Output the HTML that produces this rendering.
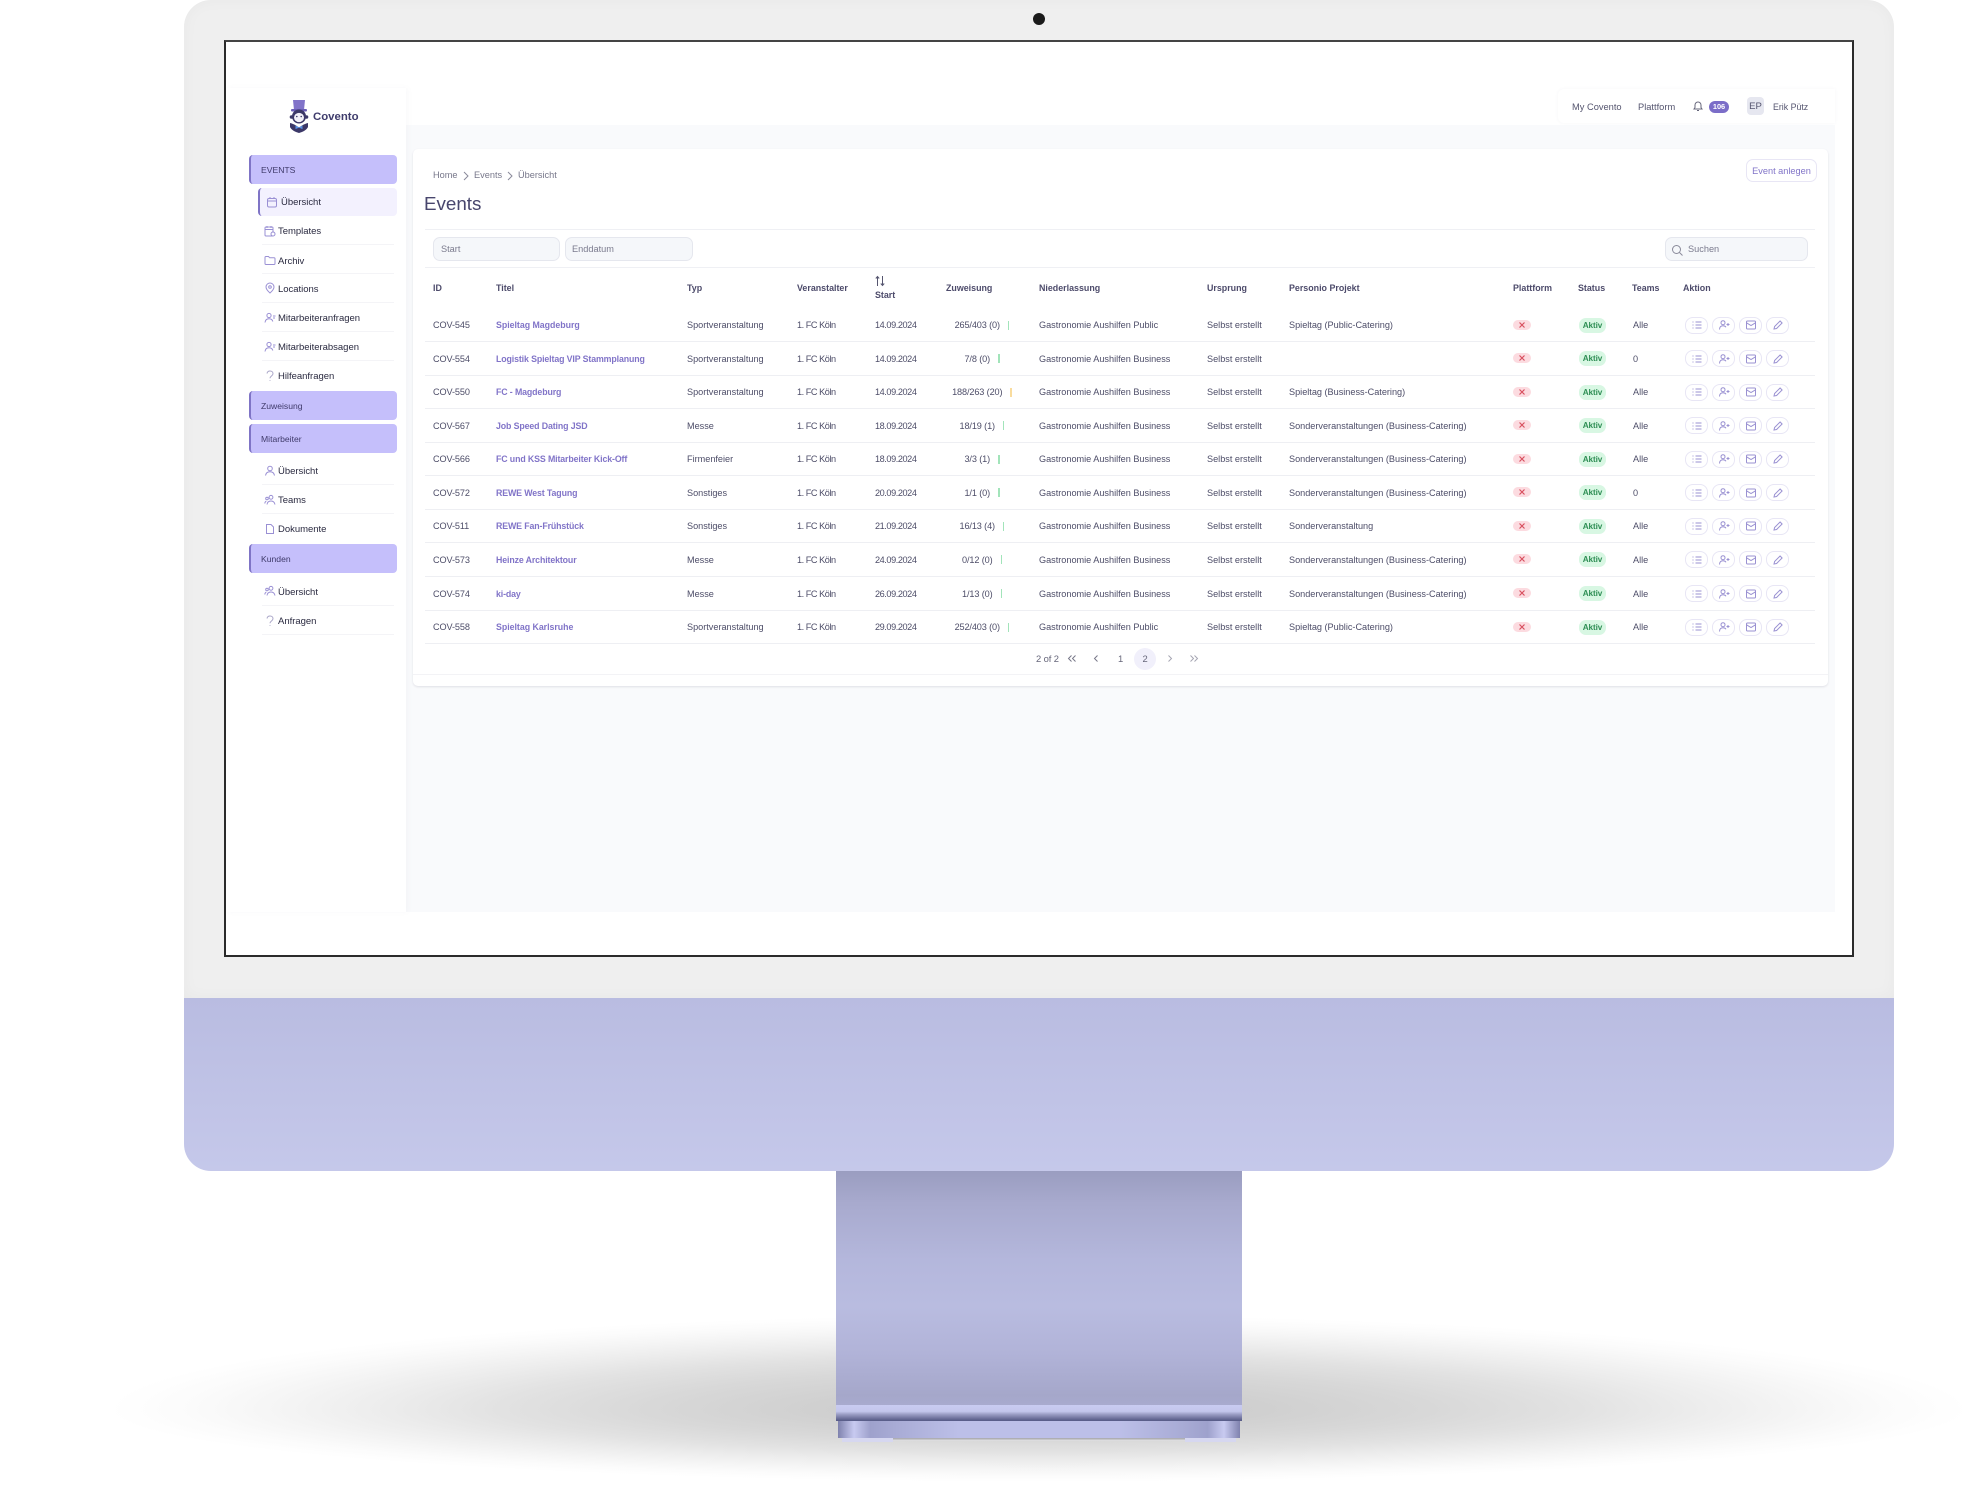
<!DOCTYPE html>
<html lang="de"><head><meta charset="utf-8"><title>Covento</title>
<style>
html,body{margin:0;padding:0;background:#fff}
#p{position:relative;width:1982px;height:1490px;overflow:hidden;background:#fff;font-family:"Liberation Sans",sans-serif;color:#55556f}
#p div,#p span.a{position:absolute}
.sh1{left:0;top:1310px;width:1982px;height:100px;background:radial-gradient(ellipse 930px 95px at 1039px 100px,#cbcbcb 0,#cfcfcf 22%,#d8d8d8 42%,#e2e2e2 58%,#ececec 70%,#f5f5f5 82%,#fbfbfb 91%,#fff 100%)}
.sh2{left:0;top:1410px;width:1982px;height:80px;background:radial-gradient(ellipse 930px 72px at 1039px 0,#cbcbcb 0,#cfcfcf 22%,#d8d8d8 42%,#e2e2e2 58%,#ececec 70%,#f5f5f5 82%,#fbfbfb 91%,#fff 100%)}
.bez{left:184px;top:0;width:1710px;height:998px;background:#efefef;border-radius:27px 27px 0 0;box-shadow:inset 0 0 16px rgba(0,0,0,.03)}
.chin{left:184px;top:998px;width:1710px;height:173px;border-radius:0 0 27px 27px;background:linear-gradient(#b9bce1,#c5c8ea)}
.cam{left:1033px;top:13px;width:12px;height:12px;border-radius:50%;background:#1a1a1a}
.scr{left:224px;top:40px;width:1626px;height:913px;background:#fff;border:2px solid #2b2b2b;border-top-color:#444}
.stand{left:836px;top:1171px;width:406px;height:234px;background:linear-gradient(#9a9dc0 0,#a8aace 14%,#b4b7dc 38%,#b9bce0 58%,#b1b3d8 78%,#a5a7ca 96%,#a8aace 100%)}
.band{left:836px;top:1405px;width:406px;height:16px;background:linear-gradient(#c9cbf1 0,#c3c6ec 40%,#9b9ec5 58%,#5a5e8a 95%)}
.foot{left:838px;top:1421px;width:402px;height:17px;background:linear-gradient(90deg,#7f82ae 0,#c8caf0 4%,#9ea1cc 8%,#a8abd5 14%,#bcbfe8 30%,#bcbfe8 70%,#a8abd5 86%,#9ea1cc 92%,#c8caf0 96%,#7f82ae 100%)}
.t1{left:842px;top:1438px;width:51px;height:4px;background:#d6d7f0}
.t2{left:1185px;top:1438px;width:51px;height:4px;background:#d6d7f0}
.t3{left:893px;top:1438px;width:292px;height:3px;background:linear-gradient(#a2a2a8,#e8e8e8)}
#u{left:0;top:0;width:1982px;height:1490px;filter:blur(.3px)}
.bg{left:406px;top:125px;width:1429px;height:787px;background:#f9fafc}
.side{left:226px;top:88px;width:180px;height:824px;background:#fff;box-shadow:2px 0 5px rgba(90,90,130,.04)}
.hd{left:1558px;top:89px;width:277px;height:34px;background:#fff;border-radius:6px 0 0 6px;box-shadow:0 0 3px rgba(90,90,130,.06)}
.card{left:413px;top:149px;width:1415px;height:537px;background:#fff;border-radius:5px;box-shadow:0 1px 2px rgba(70,70,100,.14)}
.t{white-space:nowrap;font-size:9.3px;line-height:14px}
.sec{left:249px;width:148px;height:29px;background:#c5bffb;border-left:2.5px solid #7f74c6;box-sizing:border-box;border-radius:4px;font-size:8.6px;line-height:30.5px;padding-left:10px;color:#3f3a6a}
.act{left:258px;top:188px;width:139px;height:28px;background:#f3f1fe;border-left:2.5px solid #7f74c6;box-sizing:border-box;border-radius:4px}
.it{left:278px;font-size:9.5px;line-height:14px;color:#2a2a40;white-space:nowrap;margin-top:-6px;letter-spacing:-.02px}
.sl{left:262px;width:132px;height:1px;background:#f4f4f7}
.ic{left:264px;margin-top:-6px;width:12px;height:12px}
.ic svg,.x svg{display:block}
.l{height:1px;background:#eff0f4}
.inp{top:237px;height:24px;background:#f5f7fa;border:1px solid #e5e7ee;box-sizing:border-box;border-radius:7px;font-size:9.2px;line-height:23px;color:#7b7b8e}
.th{top:281px;font-size:8.9px;font-weight:bold;line-height:14px;color:#4d4b6b;white-space:nowrap}
.r{left:425px;width:1390px;height:33.55px;border-bottom:1px solid #eeeff3;box-sizing:border-box}
.r>span{position:absolute;top:9.5px;line-height:14px;font-size:9.15px;color:#4d4d68;white-space:nowrap}
.r>.c1{left:8px;letter-spacing:-.1px}
.r>.c2{left:71px;font-weight:bold;font-size:8.8px;color:#8174c8;letter-spacing:-.12px}
.r>.c3{left:262px}
.r>.c4{left:372px;letter-spacing:-.45px}
.r>.c5{left:450px;letter-spacing:-.42px}
.r>.c6{left:497px;width:120px;display:flex;justify-content:center;align-items:center;gap:8px;letter-spacing:-.12px}
.r>.c6 i{display:block;width:1.5px;height:9px;background:#a2e4ba}
.r>.c6 i.o{background:#f9dc9e}
.r>.c7{left:614px}
.r>.c8{left:782px}
.r>.c9{left:864px}
.r>.pl{left:1088px;top:11px;width:18px;height:10px;background:#fcdbe0;border-radius:5px}
.r>.st{left:1154px;top:9px;width:27px;height:15px;background:#d8f7e3;border-radius:7px;text-align:center;color:#2f8f55;font-weight:bold;font-size:8.2px;line-height:15px;letter-spacing:-.1px}
.r>.c12{left:1208px}
.r>.b1,.r>.b2,.r>.b3,.r>.b4{top:8px;width:21px;height:15px;border:1px solid #e8e6f5;border-radius:8px;background:#fff;box-sizing:content-box}
.r>.b1{left:1260px}.r>.b2{left:1287px}.r>.b3{left:1314px}.r>.b4{left:1341px}
.r svg{display:block;margin:1.5px auto 0}
.pg{top:652px;font-size:9.4px;line-height:14px;color:#66667a;white-space:nowrap}
</style></head><body>
<svg width="0" height="0" style="position:absolute"><defs>
<symbol id="ix" viewBox="0 0 10 10"><path d="M2.500 2.500l5 5M7.500 2.500l-5 5" stroke="#d8505f" stroke-width="1.2" fill="none"/></symbol>
<symbol id="il" viewBox="0 0 12 12"><path d="M4.500 3h6M4.500 6h6M4.500 9h6M1.500 3h1M1.500 6h1M1.500 9h1" stroke="#9a91d2" fill="none"/></symbol>
<symbol id="iu" viewBox="0 0 12 12"><circle cx="5" cy="3.700" r="2" stroke="#9a91d2" fill="none"/><path d="M1.500 10.500c0-2.500 1.500-3.800 3.500-3.800 1.400 0 2.400.5 3 1.500M8.500 5.500h3M10 4v3" stroke="#9a91d2" fill="none"/></symbol>
<symbol id="im" viewBox="0 0 12 12"><rect x="1.500" y="2" width="9" height="8" rx="1" stroke="#9a91d2" fill="none"/><path d="M1.500 3.800l4.500 2.700 4.500-2.700" stroke="#9a91d2" fill="none"/></symbol>
<symbol id="ip" viewBox="0 0 12 12"><path d="M2 10l.6-2.500 5.500-5.500 2 2-5.500 5.500z" stroke="#9a91d2" fill="none"/></symbol>
<symbol id="ue" viewBox="0 0 12 12"><circle cx="6" cy="3.500" r="2.300" stroke="#9a90d4" fill="none"/><path d="M1.500 10.500c.4-2.600 2.200-3.800 4.500-3.800s4.100 1.200 4.500 3.800" stroke="#9a90d4" fill="none"/></symbol>
<symbol id="ua" viewBox="0 0 12 12"><circle cx="5" cy="3.500" r="2.100" stroke="#9a90d4" fill="none"/><path d="M1 10.500c.3-2.600 1.900-3.800 4-3.800s3.400 1 3.800 2.800M9 4h2.500M9 6h2" stroke="#9a90d4" fill="none"/></symbol>
<symbol id="ut" viewBox="0 0 12 12"><circle cx="7" cy="3.300" r="1.900" stroke="#9a90d4" fill="none"/><circle cx="3" cy="4.500" r="1.300" stroke="#9a90d4" fill="none"/><path d="M3 10.500c.3-2.400 1.800-3.500 4-3.500s3.500 1.100 4 3.500M.8 9.500c.1-1.200.6-2 1.500-2.400" stroke="#9a90d4" fill="none"/></symbol>
<symbol id="uq" viewBox="0 0 12 12"><path d="M3 3.500C3.300 1.800 4.500 1 6 1c1.800 0 3 1.100 3 2.600 0 2.400-3 2.400-3 4.700M6 10.300v.7" stroke="#aaa6c8" fill="none"/></symbol>
</defs></svg>
<div id="p">
<div class="sh1"></div><div class="sh2"></div>
<div class="bez"></div><div class="chin"></div><div class="cam"></div>
<div class="stand"></div><div class="band"></div><div class="t3"></div><div class="t1"></div><div class="t2"></div><div class="foot"></div>
<div class="scr"></div>
<div id="u">
<div class="bg"></div><div class="side"></div><div class="hd"></div><div class="card"></div>

<div style="left:288px;top:99px;width:22px;height:35px"><svg width="22" height="35" viewBox="0 0 22 35">
<path d="M5 1h12l-1 10H6z" fill="#8173c9"/><rect x="3" y="10" width="16" height="2.500" rx="1" fill="#6a5db5"/>
<circle cx="11" cy="17.500" r="7" fill="#3c3868"/><circle cx="3.500" cy="18" r="1.800" fill="#3c3868"/><circle cx="18.500" cy="18" r="1.800" fill="#3c3868"/>
<ellipse cx="11" cy="18.500" rx="5" ry="4.600" fill="#f2f0f8"/><circle cx="8.800" cy="17.500" r=".8" fill="#3c3868"/><circle cx="13.200" cy="17.500" r=".8" fill="#3c3868"/>
<path d="M2 24c2 .5 4 1.200 6 2.500l3 2 3-2c2-1.300 4-2 6-2.500v4c-1 2.500-5 5-9 6-4-1-8-3.500-9-6z" fill="#3c3868"/>
<path d="M7.500 26.500l3.500 1.700 3.500-1.700v3.600l-3.500-1.500-3.500 1.500z" fill="#5b8fe0"/></svg></div>
<div class="t" style="left:313px;top:109.500px;font-size:11.400px;font-weight:bold;color:#3f3c6c">Covento</div>

<div class="sec" style="top:155px">EVENTS</div>
<div class="act"></div>
<div class="ic" style="left:266px;top:202px"><svg width="12" height="12" viewBox="0 0 12 12"><rect x="1.500" y="2.500" width="9" height="8.500" rx="1.500" stroke="#9a90d4" fill="none"/><path d="M1.500 5h9M4 1v2M8 1v2" stroke="#9a90d4" fill="none"/></svg></div>
<div class="it" style="left:281px;top:202px">Übersicht</div>
<div class="ic" style="top:231px"><svg width="12" height="12" viewBox="0 0 12 12"><rect x="1" y="2" width="8" height="9" rx="1" stroke="#9a90d4" fill="none"/><path d="M1 4.500h8M3 1v2M7 1v2" stroke="#9a90d4" fill="none"/><circle cx="9" cy="9" r="2" fill="#fff" stroke="#9a90d4"/></svg></div>
<div class="it" style="top:231px">Templates</div><div class="sl" style="top:244px"></div>
<div class="ic" style="top:260px"><svg width="12" height="12" viewBox="0 0 12 12"><path d="M1 3.500c0-.6.400-1 1-1h2.500l1.200 1.300H10c.6 0 1 .4 1 1v4.700c0 .6-.4 1-1 1H2c-.6 0-1-.4-1-1z" stroke="#9a90d4" fill="none"/></svg></div>
<div class="it" style="top:260.500px">Archiv</div><div class="sl" style="top:273px"></div>
<div class="ic" style="top:288px"><svg width="12" height="12" viewBox="0 0 12 12"><path d="M6 11C3.500 8.800 2 7 2 5a4 4 0 018 0c0 2-1.500 3.800-4 6z" stroke="#9a90d4" fill="none"/><circle cx="6" cy="5" r="1.300" stroke="#9a90d4" fill="none"/></svg></div>
<div class="it" style="top:289px">Locations</div><div class="sl" style="top:302px"></div>
<div class="ic" style="top:318px"><svg width="12" height="12"><use href="#ua"/></svg></div>
<div class="it" style="top:318px">Mitarbeiteranfragen</div><div class="sl" style="top:331px"></div>
<div class="ic" style="top:347px"><svg width="12" height="12"><use href="#ua"/></svg></div>
<div class="it" style="top:347px">Mitarbeiterabsagen</div><div class="sl" style="top:360px"></div>
<div class="ic" style="top:376px"><svg width="12" height="12"><use href="#uq"/></svg></div>
<div class="it" style="top:376px">Hilfeanfragen</div>
<div class="sec" style="top:391px">Zuweisung</div>
<div class="sec" style="top:424px">Mitarbeiter</div>
<div class="ic" style="top:471px"><svg width="12" height="12"><use href="#ue"/></svg></div>
<div class="it" style="top:471px">Übersicht</div><div class="sl" style="top:484px"></div>
<div class="ic" style="top:500px"><svg width="12" height="12"><use href="#ut"/></svg></div>
<div class="it" style="top:500px">Teams</div><div class="sl" style="top:513px"></div>
<div class="ic" style="top:529px"><svg width="12" height="12" viewBox="0 0 12 12"><path d="M2.500 1.500h4.500l2.500 2.500v6.500h-7z" stroke="#9a90d4" fill="none"/></svg></div>
<div class="it" style="top:529px">Dokumente</div>
<div class="sec" style="top:544px">Kunden</div>
<div class="ic" style="top:591px"><svg width="12" height="12"><use href="#ut"/></svg></div>
<div class="it" style="top:592px">Übersicht</div><div class="sl" style="top:605px"></div>
<div class="ic" style="top:621px"><svg width="12" height="12"><use href="#uq"/></svg></div>
<div class="it" style="top:621px">Anfragen</div><div class="sl" style="top:634px"></div>

<div class="t" style="left:1572px;top:100px">My Covento</div>
<div class="t" style="left:1638px;top:100px">Plattform</div>
<div style="left:1692px;top:99px;width:12px;height:12px"><svg width="12" height="12" viewBox="0 0 12 12"><path d="M2 9h8L9 7.500V5a3 3 0 00-6 0v2.500zM5 10.500h2" stroke="#66667a" fill="none"/></svg></div>
<div style="left:1709px;top:101px;width:20px;height:12px;border-radius:6px;background:#7b6dc8;color:#fff;font-size:7.400px;font-weight:bold;line-height:12px;text-align:center">106</div>
<div style="left:1747px;top:97px;width:17px;height:18px;border-radius:4px;background:#e6e7f0;color:#55556f;font-size:9.600px;line-height:19px;text-align:center">EP</div>
<div class="t" style="left:1773px;top:100px;font-size:8.800px">Erik Pütz</div>

<div class="t" style="left:433px;top:168px;font-size:9.2px;color:#77778a">Home</div>
<div style="left:463px;top:168px;width:6px;height:10px"><svg width="6" height="10"><path d="M1 1l4 4-4 4" stroke="#8a8a9a" fill="none"/></svg></div>
<div class="t" style="left:474px;top:168px;font-size:9.2px;color:#77778a">Events</div>
<div style="left:507px;top:168px;width:6px;height:10px"><svg width="6" height="10"><path d="M1 1l4 4-4 4" stroke="#8a8a9a" fill="none"/></svg></div>
<div class="t" style="left:518px;top:168px;font-size:9.2px;color:#77778a">Übersicht</div>
<div class="t" style="left:424px;top:193px;font-size:18.800px;line-height:22px;color:#48466d">Events</div>
<div style="left:1746px;top:159px;width:71px;height:23px;box-sizing:border-box;border:1px solid #e8e6f5;border-radius:7px;background:#fff;text-align:center;font-size:9.2px;line-height:23px;color:#8174c8;white-space:nowrap">Event anlegen</div>

<div class="l" style="left:425px;top:229px;width:1390px"></div>
<div class="inp" style="left:433px;width:127px;padding-left:7px">Start</div>
<div class="inp" style="left:565px;width:128px;padding-left:6px">Enddatum</div>
<div class="inp" style="left:1665px;width:143px;padding-left:22px">Suchen</div>
<div style="left:1671px;top:243px;width:12px;height:12px"><svg width="12" height="12"><circle cx="5.500" cy="5.500" r="4" stroke="#8a8a9a" fill="none"/><path d="M8.500 8.500l3 3" stroke="#8a8a9a" fill="none"/></svg></div>
<div class="l" style="left:425px;top:267px;width:1390px"></div>

<div class="th" style="left:433px">ID</div>
<div class="th" style="left:496px">Titel</div>
<div class="th" style="left:687px">Typ</div>
<div class="th" style="left:797px">Veranstalter</div>
<div style="left:875px;top:274px;width:10px;height:12px"><svg width="10" height="12"><path d="M2.500 11V1.500M.8 3.500l1.700-2 1.700 2M7.500 1v9.500M5.800 8.500l1.700 2 1.700-2" stroke="#55556f" fill="none"/></svg></div>
<div class="th" style="left:875px;top:288px">Start</div>
<div class="th" style="left:946px">Zuweisung</div>
<div class="th" style="left:1039px">Niederlassung</div>
<div class="th" style="left:1207px">Ursprung</div>
<div class="th" style="left:1289px">Personio Projekt</div>
<div class="th" style="left:1513px">Plattform</div>
<div class="th" style="left:1578px">Status</div>
<div class="th" style="left:1632px">Teams</div>
<div class="th" style="left:1683px">Aktion</div>

<div class="r" style="top:308.500px"><span class="c1">COV-545</span><span class="c2" style="letter-spacing:-.02px">Spieltag Magdeburg</span><span class="c3">Sportveranstaltung</span><span class="c4">1. FC Köln</span><span class="c5">14.09.2024</span><span class="c6">265/403 (0)<i></i></span><span class="c7">Gastronomie Aushilfen Public</span><span class="c8">Selbst erstellt</span><span class="c9">Spieltag (Public-Catering)</span><span class="pl"><svg width="10" height="10" style="margin:0 auto"><use href="#ix"/></svg></span><span class="st">Aktiv</span><span class="c12">Alle</span><span class="b1"><svg width="12" height="12"><use href="#il"/></svg></span><span class="b2"><svg width="12" height="12"><use href="#iu"/></svg></span><span class="b3"><svg width="12" height="12"><use href="#im"/></svg></span><span class="b4"><svg width="12" height="12"><use href="#ip"/></svg></span></div>
<div class="r" style="top:342px"><span class="c1">COV-554</span><span class="c2">Logistik Spieltag VIP Stammplanung</span><span class="c3">Sportveranstaltung</span><span class="c4">1. FC Köln</span><span class="c5">14.09.2024</span><span class="c6">7/8 (0)<i></i></span><span class="c7">Gastronomie Aushilfen Business</span><span class="c8">Selbst erstellt</span><span class="pl"><svg width="10" height="10" style="margin:0 auto"><use href="#ix"/></svg></span><span class="st">Aktiv</span><span class="c12">0</span><span class="b1"><svg width="12" height="12"><use href="#il"/></svg></span><span class="b2"><svg width="12" height="12"><use href="#iu"/></svg></span><span class="b3"><svg width="12" height="12"><use href="#im"/></svg></span><span class="b4"><svg width="12" height="12"><use href="#ip"/></svg></span></div>
<div class="r" style="top:375.600px"><span class="c1">COV-550</span><span class="c2">FC - Magdeburg</span><span class="c3">Sportveranstaltung</span><span class="c4">1. FC Köln</span><span class="c5">14.09.2024</span><span class="c6">188/263 (20)<i class="o"></i></span><span class="c7">Gastronomie Aushilfen Business</span><span class="c8">Selbst erstellt</span><span class="c9">Spieltag (Business-Catering)</span><span class="pl"><svg width="10" height="10" style="margin:0 auto"><use href="#ix"/></svg></span><span class="st">Aktiv</span><span class="c12">Alle</span><span class="b1"><svg width="12" height="12"><use href="#il"/></svg></span><span class="b2"><svg width="12" height="12"><use href="#iu"/></svg></span><span class="b3"><svg width="12" height="12"><use href="#im"/></svg></span><span class="b4"><svg width="12" height="12"><use href="#ip"/></svg></span></div>
<div class="r" style="top:409.200px"><span class="c1">COV-567</span><span class="c2">Job Speed Dating JSD</span><span class="c3">Messe</span><span class="c4">1. FC Köln</span><span class="c5">18.09.2024</span><span class="c6">18/19 (1)<i></i></span><span class="c7">Gastronomie Aushilfen Business</span><span class="c8">Selbst erstellt</span><span class="c9">Sonderveranstaltungen (Business-Catering)</span><span class="pl"><svg width="10" height="10" style="margin:0 auto"><use href="#ix"/></svg></span><span class="st">Aktiv</span><span class="c12">Alle</span><span class="b1"><svg width="12" height="12"><use href="#il"/></svg></span><span class="b2"><svg width="12" height="12"><use href="#iu"/></svg></span><span class="b3"><svg width="12" height="12"><use href="#im"/></svg></span><span class="b4"><svg width="12" height="12"><use href="#ip"/></svg></span></div>
<div class="r" style="top:442.700px"><span class="c1">COV-566</span><span class="c2">FC und KSS Mitarbeiter Kick-Off</span><span class="c3">Firmenfeier</span><span class="c4">1. FC Köln</span><span class="c5">18.09.2024</span><span class="c6">3/3 (1)<i></i></span><span class="c7">Gastronomie Aushilfen Business</span><span class="c8">Selbst erstellt</span><span class="c9">Sonderveranstaltungen (Business-Catering)</span><span class="pl"><svg width="10" height="10" style="margin:0 auto"><use href="#ix"/></svg></span><span class="st">Aktiv</span><span class="c12">Alle</span><span class="b1"><svg width="12" height="12"><use href="#il"/></svg></span><span class="b2"><svg width="12" height="12"><use href="#iu"/></svg></span><span class="b3"><svg width="12" height="12"><use href="#im"/></svg></span><span class="b4"><svg width="12" height="12"><use href="#ip"/></svg></span></div>
<div class="r" style="top:476.300px"><span class="c1">COV-572</span><span class="c2">REWE West Tagung</span><span class="c3">Sonstiges</span><span class="c4">1. FC Köln</span><span class="c5">20.09.2024</span><span class="c6">1/1 (0)<i></i></span><span class="c7">Gastronomie Aushilfen Business</span><span class="c8">Selbst erstellt</span><span class="c9">Sonderveranstaltungen (Business-Catering)</span><span class="pl"><svg width="10" height="10" style="margin:0 auto"><use href="#ix"/></svg></span><span class="st">Aktiv</span><span class="c12">0</span><span class="b1"><svg width="12" height="12"><use href="#il"/></svg></span><span class="b2"><svg width="12" height="12"><use href="#iu"/></svg></span><span class="b3"><svg width="12" height="12"><use href="#im"/></svg></span><span class="b4"><svg width="12" height="12"><use href="#ip"/></svg></span></div>
<div class="r" style="top:509.800px"><span class="c1">COV-511</span><span class="c2">REWE Fan-Frühstück</span><span class="c3">Sonstiges</span><span class="c4">1. FC Köln</span><span class="c5">21.09.2024</span><span class="c6">16/13 (4)<i></i></span><span class="c7">Gastronomie Aushilfen Business</span><span class="c8">Selbst erstellt</span><span class="c9">Sonderveranstaltung</span><span class="pl"><svg width="10" height="10" style="margin:0 auto"><use href="#ix"/></svg></span><span class="st">Aktiv</span><span class="c12">Alle</span><span class="b1"><svg width="12" height="12"><use href="#il"/></svg></span><span class="b2"><svg width="12" height="12"><use href="#iu"/></svg></span><span class="b3"><svg width="12" height="12"><use href="#im"/></svg></span><span class="b4"><svg width="12" height="12"><use href="#ip"/></svg></span></div>
<div class="r" style="top:543.400px"><span class="c1">COV-573</span><span class="c2">Heinze Architektour</span><span class="c3">Messe</span><span class="c4">1. FC Köln</span><span class="c5">24.09.2024</span><span class="c6">0/12 (0)<i></i></span><span class="c7">Gastronomie Aushilfen Business</span><span class="c8">Selbst erstellt</span><span class="c9">Sonderveranstaltungen (Business-Catering)</span><span class="pl"><svg width="10" height="10" style="margin:0 auto"><use href="#ix"/></svg></span><span class="st">Aktiv</span><span class="c12">Alle</span><span class="b1"><svg width="12" height="12"><use href="#il"/></svg></span><span class="b2"><svg width="12" height="12"><use href="#iu"/></svg></span><span class="b3"><svg width="12" height="12"><use href="#im"/></svg></span><span class="b4"><svg width="12" height="12"><use href="#ip"/></svg></span></div>
<div class="r" style="top:577px"><span class="c1">COV-574</span><span class="c2">ki-day</span><span class="c3">Messe</span><span class="c4">1. FC Köln</span><span class="c5">26.09.2024</span><span class="c6">1/13 (0)<i></i></span><span class="c7">Gastronomie Aushilfen Business</span><span class="c8">Selbst erstellt</span><span class="c9">Sonderveranstaltungen (Business-Catering)</span><span class="pl"><svg width="10" height="10" style="margin:0 auto"><use href="#ix"/></svg></span><span class="st">Aktiv</span><span class="c12">Alle</span><span class="b1"><svg width="12" height="12"><use href="#il"/></svg></span><span class="b2"><svg width="12" height="12"><use href="#iu"/></svg></span><span class="b3"><svg width="12" height="12"><use href="#im"/></svg></span><span class="b4"><svg width="12" height="12"><use href="#ip"/></svg></span></div>
<div class="r" style="top:610.500px"><span class="c1">COV-558</span><span class="c2" style="letter-spacing:-.02px">Spieltag Karlsruhe</span><span class="c3">Sportveranstaltung</span><span class="c4">1. FC Köln</span><span class="c5">29.09.2024</span><span class="c6">252/403 (0)<i></i></span><span class="c7">Gastronomie Aushilfen Public</span><span class="c8">Selbst erstellt</span><span class="c9">Spieltag (Public-Catering)</span><span class="pl"><svg width="10" height="10" style="margin:0 auto"><use href="#ix"/></svg></span><span class="st">Aktiv</span><span class="c12">Alle</span><span class="b1"><svg width="12" height="12"><use href="#il"/></svg></span><span class="b2"><svg width="12" height="12"><use href="#iu"/></svg></span><span class="b3"><svg width="12" height="12"><use href="#im"/></svg></span><span class="b4"><svg width="12" height="12"><use href="#ip"/></svg></span></div>

<div class="pg" style="left:1036px;letter-spacing:-.1px">2 of 2</div>
<div class="pg" style="left:1067px;top:654px;width:10px;height:10px"><svg width="10" height="10"><path d="M4.500 1.500L1.500 4.500l3 3M8.500 1.500L5.500 4.500l3 3" stroke="#777788" fill="none"/></svg></div>
<div class="pg" style="left:1093px;top:654px;width:6px;height:10px"><svg width="6" height="10"><path d="M4.500 1.500L1.500 4.500l3 3" stroke="#777788" fill="none"/></svg></div>
<div class="pg" style="left:1118px">1</div>
<div style="left:1134px;top:648px;width:22px;height:22px;border-radius:50%;background:#f1f0fb"></div>
<div class="pg" style="left:1142.500px">2</div>
<div class="pg" style="left:1167px;top:654px;width:6px;height:10px"><svg width="6" height="10"><path d="M1.500 1.500l3 3-3 3" stroke="#a5a5b2" fill="none"/></svg></div>
<div class="pg" style="left:1189px;top:654px;width:10px;height:10px"><svg width="10" height="10"><path d="M1.500 1.500l3 3-3 3M5.500 1.500l3 3-3 3" stroke="#a5a5b2" fill="none"/></svg></div>
<div class="l" style="left:413px;top:674px;width:1415px;background:#f3f3f6"></div>
</div>
</div>
</body></html>
